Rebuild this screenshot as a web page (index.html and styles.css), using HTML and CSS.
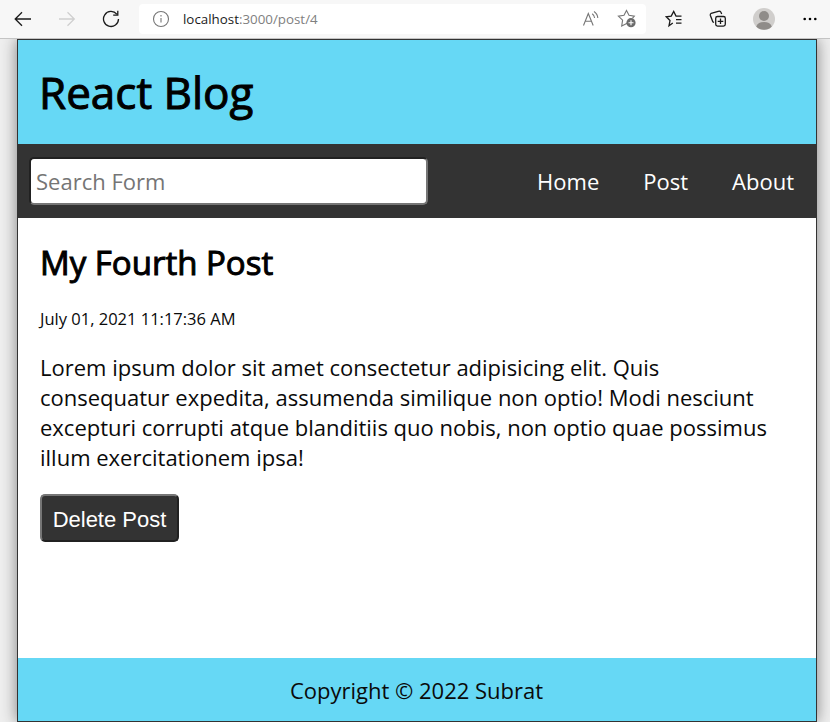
FILE: index.html
```html
<!DOCTYPE html>
<html lang="en">
<head>
<meta charset="utf-8">
<title>React Blog</title>
<link rel="stylesheet" href="styles.css">
</head>
<body>
<div class="toolbar">
  <svg class="ic back" width="18" height="16" viewBox="0 0 18 16"><path d="M17 8H1.5M8 1.2L1.2 8L8 14.8"/></svg>
  <svg class="ic forward" width="18" height="16" viewBox="0 0 18 16"><path d="M1 8H16M9.5 1.2L16.3 8L9.5 14.8"/></svg>
  <svg class="ic reload" width="18" height="18" viewBox="0 0 18 18"><path d="M14.8 4.2A7.5 7.5 0 1 0 16.5 9M15.8 .8V5.2H11.2"/></svg>
  <div class="address">
    <svg class="ic info" width="18" height="18" viewBox="0 0 18 18"><circle cx="9" cy="9" r="7.5"/><path d="M9 8V12.5M9 5V6.5"/></svg>
    <span class="url"><span class="host">localhost</span>:3000/post/4</span>
    <svg class="ic read" width="18" height="18" viewBox="0 0 18 18"><path d="M1.5 15.5L6.3 3.5L11.2 15.5M3.2 11.3H9.5M10.2 3.8Q12.5 5.5 12.6 8M12 1.5Q15.6 4 15.8 8"/></svg>
    <svg class="ic star-add" width="20" height="20" viewBox="0 0 20 20"><path d="M10.2 14.3L4.7 17.1L5.6 11.2L1.4 7.2L7 6.3L9.5 1.4L12 6.3L17.3 7.2L15.6 9"/><circle class="disc" cx="14" cy="13.7" r="4.6"/><path class="plus" d="M11.5 13.7H16.5M14 11.2V16.2"/></svg>
  </div>
  <svg class="ic favorites" width="18" height="18" viewBox="0 0 18 18"><path d="M7.8 13L4 15.8L5 10.5L1.3 6.8L6.2 6.1L8.7 1.5L11 6.1H16.5M11 9.6H16.5M11 13.1H16.5"/></svg>
  <svg class="ic collections" width="18" height="18" viewBox="0 0 18 18"><rect x="6.7" y="6.5" width="9.6" height="9.6" rx="1.8"/><path d="M11.5 8.5V14M8.7 11.3H14.3M5 12.5L3.8 11.8L1.3 5.2Q1 4 2.2 3.3L9.2 1.3Q11 .8 11.8 2L12.7 4"/></svg>
  <svg class="avatar" width="22" height="22" viewBox="0 0 22 22"><circle cx="11" cy="11" r="11" fill="#d0cecc"/><circle cx="11" cy="8" r="5" fill="#8f8c89"/><path d="M3.2 18.4Q5 14 11 14T18.8 18.4A11 11 0 0 1 3.2 18.4Z" fill="#8f8c89"/></svg>
  <svg class="more" width="14" height="4" viewBox="0 0 14 4"><circle cx="1.7" cy="2" r="1.3"/><circle cx="7" cy="2" r="1.3"/><circle cx="12.3" cy="2" r="1.3"/></svg>
</div>
<div class="page">
  <div class="app">
    <header class="header"><h1>React Blog</h1></header>
    <nav class="nav">
      <input class="search" type="text" placeholder="Search Form">
      <ul><li><a>Home</a></li><li><a>Post</a></li><li><a>About</a></li></ul>
    </nav>
    <main class="post">
      <h2>My Fourth Post</h2>
      <p class="date">July 01, 2021 11:17:36 AM</p>
      <p class="body">Lorem ipsum dolor sit amet consectetur adipisicing elit. Quis consequatur expedita, assumenda similique non optio! Modi nesciunt excepturi corrupti atque blanditiis quo nobis, non optio quae possimus illum exercitationem ipsa!</p>
      <button class="delete">Delete Post</button>
    </main>
    <footer class="footer">Copyright © 2022 Subrat</footer>
  </div>
</div>
</body>
</html>
```
FILE: styles.css
```css
* { box-sizing: border-box; margin: 0; padding: 0; }
body {
  height: 722px;
  display: flex;
  flex-direction: column;
  overflow: hidden;
  font: 22px/30px "Open Sans", sans-serif;
  color: #0a0a0a;
  background: #efefef;
}
.toolbar {
  height: 39px;
  flex: none;
  display: flex;
  align-items: center;
  padding: 0 13px 1px 14px;
  background: #f7f7f7;
  border-bottom: 1px solid #c4c4c4;
}
.toolbar svg { flex: none; }
.ic { fill: none; stroke: #1b1b1b; stroke-width: 1.3; }
.forward { margin-left: 26px; stroke: #cfcfcf; }
.reload { margin-left: 26px; }
.address {
  width: 507px;
  height: 30px;
  margin-left: 19px;
  padding: 0 9px 0 13px;
  display: flex;
  align-items: center;
  background: #fff;
  border-radius: 4px;
}
.address .ic { stroke: #767676; stroke-width: 1.1; }
.url { margin-left: 13px; font-size: 13.35px; line-height: 18px; color: #808080; }
.host { color: #1b1b1b; }
.read { margin-left: auto; }
.star-add { margin-left: 17px; }
.disc { fill: #6b6b6b; stroke: none; }
.address .plus { stroke: #fff; }
.favorites { margin-left: 19px; }
.collections { margin-left: 26px; }
.avatar { margin-left: 26px; }
.more { margin-left: auto; }
.page { flex: 1; display: flex; justify-content: center; padding-left: 4px; overflow: hidden; }
.app {
  width: 800px;
  height: 683px;
  flex: none;
  display: flex;
  flex-direction: column;
  border: 1px solid #333;
  background: #fff;
  box-shadow: 0 0 15px gray;
}
.header {
  height: 104px;
  padding: 0 21px;
  display: flex;
  align-items: center;
  background: #66d8f5;
}
h1, h2 { font-weight: 400; color: #000; -webkit-text-stroke: 1px #000; }
h1 { font-size: 44px; line-height: 60px; }
.nav {
  height: 74px;
  padding: 0 22px 0 11px;
  display: flex;
  align-items: center;
  justify-content: space-between;
  background: #333;
}
.search {
  width: 399px;
  height: 48px;
  padding: 0 5px;
  font: inherit;
  background: #fff;
  border: 2px inset #767676;
  border-radius: 5px;
}
.search::placeholder { color: #757575; }
.nav ul { display: flex; gap: 44px; list-style: none; color: #fff; }
.post { flex: 1; padding: 22px; }
h2 { font-size: 33px; line-height: 45px; }
.date { margin-top: 22px; font-size: 16.5px; line-height: 23px; }
.body { margin-top: 22px; }
.delete {
  display: block;
  width: 139px;
  height: 48px;
  margin-top: 22px;
  padding-top: 3px;
  font: 22px "Liberation Sans", sans-serif;
  color: #fff;
  background: #333;
  border: 2px outset #767676;
  border-radius: 5px;
}
.footer {
  height: 63px;
  display: flex;
  align-items: center;
  justify-content: center;
  padding: 1px 1px 0 0;
  background: #66d8f5;
}
```
